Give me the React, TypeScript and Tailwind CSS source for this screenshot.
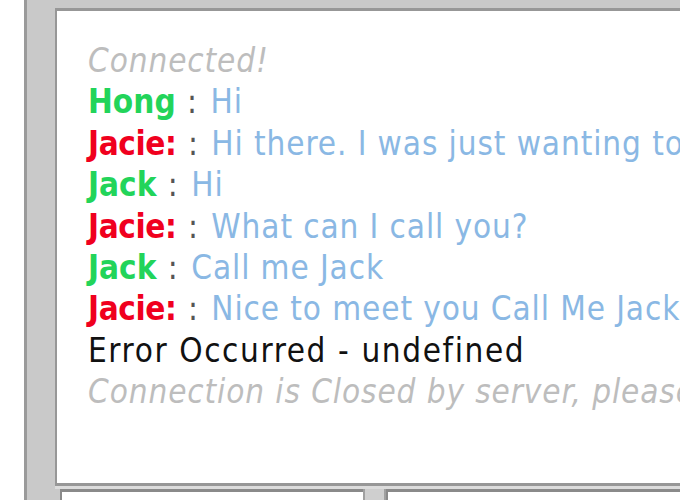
import React from "react";

type Line =
  | { kind: "sys"; text: string }
  | { kind: "err"; text: string }
  | { kind: "msg"; name: string; who: "g" | "r"; text: string };

const lines: Line[] = [
  { kind: "sys", text: "Connected!" },
  { kind: "msg", name: "Hong", who: "g", text: "Hi" },
  { kind: "msg", name: "Jacie:", who: "r", text: "Hi there. I was just wanting to talk to you" },
  { kind: "msg", name: "Jack", who: "g", text: "Hi" },
  { kind: "msg", name: "Jacie:", who: "r", text: "What can I call you?" },
  { kind: "msg", name: "Jack", who: "g", text: "Call me Jack" },
  { kind: "msg", name: "Jacie:", who: "r", text: "Nice to meet you Call Me Jack." },
  { kind: "err", text: "Error Occurred - undefined" },
  { kind: "sys", text: "Connection is Closed by server, please reconnect" },
];

export default function App() {
  return (
    <div className="w-[680px] h-[500px] bg-white overflow-hidden">
      <div className="ml-[24px] h-[500px] border-l-[3px] border-[#9a9a9a] bg-[#c9c9c9] pt-[8px] pl-[28px] flex flex-col">
        <div
          className="h-[478px] shrink-0 bg-white border-t-[3px] border-l-[2px] border-b-[3px] border-[#979797] pl-[31px] pt-[29px] whitespace-nowrap overflow-hidden"
          style={{ fontFamily: '"DejaVu Sans Condensed", "DejaVu Sans", Tahoma, sans-serif' }}
        >
          {lines.map((l, i) => {
            if (l.kind === "sys")
              return (
                <div key={i} className="text-[33px] leading-[41.4px] italic tracking-[0.9px] text-[#bdbdbd]">
                  {l.text}
                </div>
              );
            if (l.kind === "err")
              return (
                <div key={i} className="text-[33px] leading-[41.4px] tracking-[1.6px] text-[#111]">
                  {l.text}
                </div>
              );
            return (
              <div key={i} className="text-[33px] leading-[41.4px]">
                <span className={l.who === "g" ? "font-bold text-[#22d45a]" : "font-bold tracking-[-0.4px] text-[#f0001e]"}>{l.name}</span>
                <span className="text-[#555] tracking-[2px]"> : </span>
                <span className="text-[#8ab8e4] tracking-[0.9px]">{l.text}</span>
              </div>
            );
          })}
        </div>
        <div className="h-[3px] bg-[#dcdcdc] shrink-0" />
        <div className="flex flex-1 pl-[5px]">
          <div className="w-[303px] bg-white border-t-[3px] border-l-[2px] border-[#8a8a8a]" />
          <div className="w-[23px] bg-[#cfcfcf] border-x-[2px] border-[#a0a0a0]" />
          <div className="flex-1 bg-white border-t-[3px] border-l-[2px] border-[#8a8a8a]" />
        </div>
      </div>
    </div>
  );
}
